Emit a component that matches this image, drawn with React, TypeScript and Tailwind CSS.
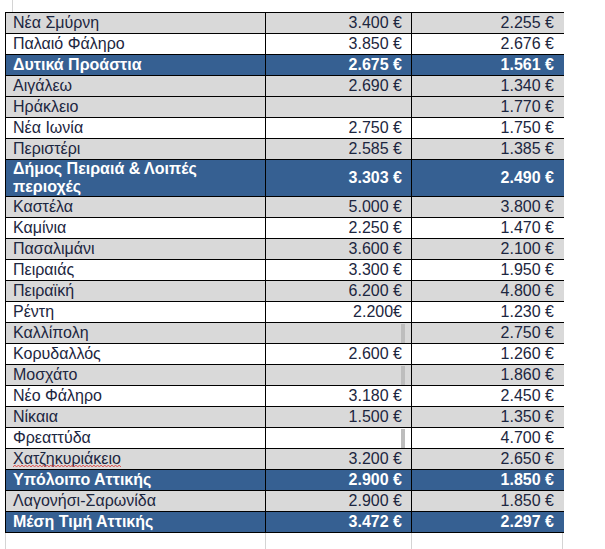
import React from "react";

type Row = {
  name: string;
  a?: string;
  b: string;
  kind: "gray" | "white" | "blue";
  bar?: boolean;
  squiggle?: boolean;
};

const rows: Row[] = [
  { name: "Νέα Σμύρνη", a: "3.400 €", b: "2.255 €", kind: "gray" },
  { name: "Παλαιό Φάληρο", a: "3.850 €", b: "2.676 €", kind: "white" },
  { name: "Δυτικά Προάστια", a: "2.675 €", b: "1.561 €", kind: "blue" },
  { name: "Αιγάλεω", a: "2.690 €", b: "1.340 €", kind: "gray" },
  { name: "Ηράκλειο", b: "1.770 €", kind: "gray" },
  { name: "Νέα Ιωνία", a: "2.750 €", b: "1.750 €", kind: "white" },
  { name: "Περιστέρι", a: "2.585 €", b: "1.385 €", kind: "gray" },
];

const piraeus: Row[] = [
  { name: "Καστέλα", a: "5.000 €", b: "3.800 €", kind: "gray" },
  { name: "Καμίνια", a: "2.250 €", b: "1.470 €", kind: "white" },
  { name: "Πασαλιμάνι", a: "3.600 €", b: "2.100 €", kind: "gray" },
  { name: "Πειραιάς", a: "3.300 €", b: "1.950 €", kind: "white" },
  { name: "Πειραϊκή", a: "6.200 €", b: "4.800 €", kind: "gray" },
  { name: "Ρέντη", a: "2.200€", b: "1.230 €", kind: "white" },
  { name: "Καλλίπολη", b: "2.750 €", kind: "gray", bar: true },
  { name: "Κορυδαλλός", a: "2.600 €", b: "1.260 €", kind: "white" },
  { name: "Μοσχάτο", b: "1.860 €", kind: "gray", bar: true },
  { name: "Νέο Φάληρο", a: "3.180 €", b: "2.450 €", kind: "white" },
  { name: "Νίκαια", a: "1.500 €", b: "1.350 €", kind: "gray" },
  { name: "Φρεαττύδα", b: "4.700 €", kind: "white", bar: true },
  { name: "Χατζηκυριάκειο", a: "3.200 €", b: "2.650 €", kind: "gray", squiggle: true },
  { name: "Υπόλοιπο Αττικής", a: "2.900 €", b: "1.850 €", kind: "blue" },
  { name: "Λαγονήσι-Σαρωνίδα", a: "2.900 €", b: "1.850 €", kind: "gray" },
  { name: "Μέση Τιμή Αττικής", a: "3.472 €", b: "2.297 €", kind: "blue" },
];

const bg = {
  gray: "bg-[#d9d9d9] text-[#1c2640]",
  white: "bg-white text-[#1c2640]",
  blue: "bg-[#366092] text-white font-bold",
};

// spellcheck squiggle under a word
function Squiggle({ children }: { children: React.ReactNode }) {
  return (
    <span className="relative">
      {children}
      <svg className="absolute left-0 top-[15px] h-[3px] w-full" preserveAspectRatio="none" viewBox="0 0 120 3">
        <path
          d="M0 2 L2 0 L4 2 L6 0 L8 2 L10 0 L12 2 L14 0 L16 2 L18 0 L20 2 L22 0 L24 2 L26 0 L28 2 L30 0 L32 2 L34 0 L36 2 L38 0 L40 2 L42 0 L44 2 L46 0 L48 2 L50 0 L52 2 L54 0 L56 2 L58 0 L60 2 L62 0 L64 2 L66 0 L68 2 L70 0 L72 2 L74 0 L76 2 L78 0 L80 2 L82 0 L84 2 L86 0 L88 2 L90 0 L92 2 L94 0 L96 2 L98 0 L100 2 L102 0 L104 2 L106 0 L108 2 L110 0 L112 2 L114 0 L116 2 L118 0 L120 2"
          fill="none"
          stroke="#e0403c"
          strokeWidth="0.9"
        />
      </svg>
    </span>
  );
}

function PriceRow({ r }: { r: Row }) {
  return (
    <div className={`flex h-[21px] border-b border-black leading-[20px] ${bg[r.kind]}`}>
      <div className="w-[260px] shrink-0 border-r border-black pl-[7px]">
        {r.squiggle ? <Squiggle>{r.name}</Squiggle> : r.name}
      </div>
      <div className="flex w-[146px] shrink-0 justify-end border-r border-black pr-[9px]">
        {r.bar ? <div className="mt-[1px] mr-[-3px] w-[4px] bg-[#bdbdbd]" /> : r.a}
      </div>
      <div className="w-[152px] shrink-0 pr-[10px] text-right">{r.b}</div>
    </div>
  );
}

export default function App() {
  return (
    <div className="h-[549px] w-[605px] overflow-hidden bg-white font-['Liberation_Sans',Arial,sans-serif] text-[16px]">
      <div className="ml-[12px] h-[12px] border-l border-[#d4d4d4]" />
      <div className="ml-[5px] w-[559px] border-t border-l border-black">
        {rows.map((r) => (
          <PriceRow key={r.name} r={r} />
        ))}
        <div className="flex h-[37px] border-b border-black bg-[#366092] font-bold text-white">
          <div className="w-[260px] shrink-0 border-r border-black pl-[7px] leading-[18px]">
            Δήμος Πειραιά &amp; Λοιπές
            <br />
            περιοχές
          </div>
          <div className="flex w-[146px] shrink-0 items-center justify-end border-r border-black pr-[9px]">
            3.303 €
          </div>
          <div className="flex w-[152px] shrink-0 items-center justify-end pr-[10px]">2.490 €</div>
        </div>
        {piraeus.map((r) => (
          <PriceRow key={r.name} r={r} />
        ))}
      </div>
      <div className="ml-[5px] flex h-[20px] w-[559px]">
        <div className="w-[260px] shrink-0 border-l border-[#d4d4d4]" />
        <div className="w-[146px] shrink-0 border-l border-[#d4d4d4]" />
        <div className="w-[152px] shrink-0 border-l border-r border-[#d4d4d4]" />
      </div>
    </div>
  );
}
